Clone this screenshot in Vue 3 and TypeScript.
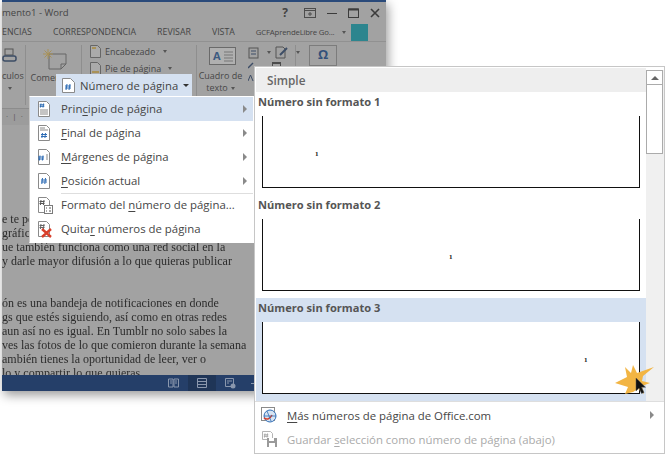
<script setup lang="ts">
type Item = { icon: string; before: string; key: string; after: string; sub?: boolean; sep?: boolean; active?: boolean; off?: boolean }

const menu: Item[] = [
  { icon: 'top', before: 'Prin', key: 'c', after: 'ipio de página', sub: true, active: true },
  { icon: 'bottom', before: '', key: 'F', after: 'inal de página', sub: true },
  { icon: 'margin', before: '', key: 'M', after: 'árgenes de página', sub: true },
  { icon: 'current', before: '', key: 'P', after: 'osición actual', sub: true, sep: true },
  { icon: 'format', before: 'Formato del ', key: 'n', after: 'úmero de página...' },
  { icon: 'remove', before: 'Quita', key: 'r', after: ' números de página' },
]

const previews = [
  { title: 'Número sin formato 1', pos: 'left', active: false },
  { title: 'Número sin formato 2', pos: 'center', active: false },
  { title: 'Número sin formato 3', pos: 'right', active: true },
]

const tabs = ['ENCIAS', 'CORRESPONDENCIA', 'REVISAR', 'VISTA']

const docTop = ['e te pe', 'gráfic', 'ue también funciona como una red social en la', 'y darle mayor difusión a lo que quieras publicar', '', '']
const docBottom = [
  'ón es una bandeja de notificaciones en donde',
  'gs que estés siguiendo, así como en otras redes',
  'aun así no es igual. En Tumblr no solo sabes la',
  'ves las fotos de lo que comieron durante la semana',
  'ambién tienes la oportunidad de leer, ver o',
  'lo y compartir lo que quieras.',
]
</script>

<template>
  <div class="stage">
    <div class="window">
      <div class="titlebar">
        <span class="title">mento1 - Word</span>
        <div class="controls">
          <span class="help">?</span>
          <svg width="12" height="10" viewBox="0 0 12 10"><rect x=".5" y=".5" width="11" height="9" fill="none" stroke="#4c4c4c"/><path d="M.5 2.5h11M6 4v4M4 6h4" stroke="#4c4c4c" fill="none"/></svg>
          <svg width="10" height="10" viewBox="0 0 10 10"><path d="M0 5.5h10" stroke="#3c3c3c"/></svg>
          <svg width="11" height="10" viewBox="0 0 11 10"><rect x=".5" y="1" width="10" height="8.5" fill="none" stroke="#3c3c3c"/><path d="M.5 1.5h10" stroke="#3c3c3c" stroke-width="2"/></svg>
          <svg width="10" height="10" viewBox="0 0 10 10"><path d="M1 1l8 8M9 1l-8 8" stroke="#3c3c3c" stroke-width="1.6"/></svg>
        </div>
      </div>
      <div class="tabs">
        <span v-for="t in tabs" :key="t">{{ t }}</span>
        <span class="account">GCFAprendeLibre Go...</span>
        <span class="caret"></span>
        <span class="badge"></span>
      </div>
      <div class="ribbon">
        <div class="group g-links">
          <svg width="16" height="16" viewBox="0 0 16 16"><rect x="3" y="1" width="8" height="6" fill="none" stroke="#555"/><rect x="1" y="8" width="13" height="5" rx="2" fill="none" stroke="#3d4d66" stroke-width="1.5"/></svg>
          <span class="lbl low">culos</span>
          <span class="caret dark"></span>
        </div>
        <div class="group g-comment">
          <svg width="26" height="22" viewBox="0 0 26 22"><path d="M8 6h17v10l-5 5H8z" fill="none" stroke="#666"/><path d="M20 21v-5h5" fill="none" stroke="#666"/><path d="M7 1v10M2 6h10M3.500 2.500l7 7M10.500 2.500l-7 7" stroke="#a99258"/></svg>
          <span class="lbl">Comen</span>
        </div>
        <div class="group g-header">
          <div class="row"><svg width="11" height="13" viewBox="0 0 11 13"><path d="M.5.500h7l3 3v9H.5z" fill="#aaa" stroke="#666"/><path d="M2 2h4v2H2z" fill="#a99258"/></svg><span>Encabezado</span><span class="caret dark"></span></div>
          <div class="row"><svg width="11" height="13" viewBox="0 0 11 13"><path d="M.5.500h7l3 3v9H.5z" fill="#aaa" stroke="#666"/><path d="M2 9h7v2H2z" fill="#a99258"/></svg><span>Pie de página</span><span class="caret dark"></span></div>
        </div>
        <div class="group g-text">
          <svg width="27" height="18" viewBox="0 0 27 18"><rect x=".5" y=".5" width="26" height="17" fill="#b0b0b0" stroke="#6a6a6a"/><path d="M15 5h9M15 8h9M15 11h9M15 14h9" stroke="#777"/><text x="4" y="13" class="boxa">A</text></svg>
          <span class="lbl">Cuadro de</span>
          <span class="lbl">texto<span class="caret dark inl"></span></span>
        </div>
        <div class="group g-parts">
          <div class="row">
            <svg width="12" height="12" viewBox="0 0 12 12"><rect x="1" y="1" width="9" height="10" fill="none" stroke="#555"/><path d="M3 4h5M3 7h5" stroke="#3d4d66"/></svg>
            <span class="caret dark"></span>
            <svg width="14" height="13" viewBox="0 0 14 13"><path d="M1 1h7l2 2v9H1z" fill="none" stroke="#555"/><path d="M5 9l7-7" stroke="#3d4d66" stroke-width="2"/></svg>
            <span class="caret dark"></span>
          </div>
          <div class="row2">
            <svg width="6" height="20" viewBox="0 0 6 20"><path d="M0 6l5-5" stroke="#3d4d66" stroke-width="1.500"/><path d="M0 19l2.500-6 2.500 6" fill="none" stroke="#3d4d66"/></svg>
            <span class="cal"></span>
          </div>
        </div>
        <div class="group g-symbol"><span class="omega">Ω</span></div>
      </div>
      <div class="ruler"><span>·&nbsp;&nbsp;|&nbsp;&nbsp;·</span></div>
      <div class="doc">
        <p v-for="(l, i) in docTop" :key="'a' + i">{{ l }}&nbsp;</p>
        <p v-for="(l, i) in docBottom" :key="'b' + i">{{ l }}</p>
      </div>
      <div class="status">
        <svg width="11" height="10" viewBox="0 0 11 10"><path d="M.5 1h4.500v8H.5zM6 1h4.500v8H6z" fill="none" stroke="#8a97ad"/><path d="M2 3h2M2 5h2M7 3h2M7 5h2" stroke="#8a97ad"/></svg>
        <span class="view-on"><svg width="10" height="10" viewBox="0 0 10 10"><path d="M.5.500h9v9h-9zM.5 3.500h9M.5 6.500h9" fill="none" stroke="#8a97ad"/></svg></span>
        <svg width="11" height="11" viewBox="0 0 11 11"><path d="M.5.500h8v8h-8zM2 3h5M2 5h2" fill="none" stroke="#8a97ad"/><circle cx="8" cy="8" r="2.500" fill="#8a97ad"/></svg>
        <span class="minus"></span>
      </div>
    </div>

    <div class="menu-head">
      <svg width="13" height="15" viewBox="0 0 13 15"><path d="M.5.500h8l4 4v10H.5z" fill="#fff" stroke="#8a8a8a"/><path d="M5 6l-1 6M8 6l-1 6M3 8h6M3 10h6" stroke="#2f6db5" fill="none"/></svg>
      <span>Número de página</span>
      <span class="caret black"></span>
    </div>

    <div class="menu">
      <div v-for="m in menu" :key="m.icon" class="menu-wrap">
        <div class="menu-item" :class="{ active: m.active }">
          <svg class="ico" width="18" height="18" viewBox="0 0 18 18">
            <path d="M3.500 1.500h8l3 3v12h-11z" fill="#fff" stroke="#8a8a8a"/>
            <template v-if="m.icon === 'top'">
              <path d="M6 3.500l-.6 4M8.600 3.500l-.6 4M4.700 4.800h4.600M4.700 6.300h4.600" stroke="#2f6db5" fill="none"/>
              <path d="M5 10h8M5 12h8M5 14h8" stroke="#8a8a8a"/>
            </template>
            <template v-else-if="m.icon === 'bottom'">
              <path d="M5 4h5M5 6h8" stroke="#8a8a8a"/>
              <path d="M7.500 9l-.6 5M10.500 9l-.6 5M6 10.500h6M6 12.500h6" stroke="#2f6db5" fill="none"/>
            </template>
            <template v-else-if="m.icon === 'margin'">
              <path d="M5 7.500l-.6 5M8 7.500l-.6 5M3 9h6M3 11h6" stroke="#2f6db5" fill="none"/>
              <path d="M11 7h2M11 9h2M11 11h2" stroke="#8a8a8a"/>
            </template>
            <template v-else-if="m.icon === 'current'">
              <path d="M7.500 6l-.7 6M10.500 6l-.7 6M6 8h6M6 10h6" stroke="#2f6db5" fill="none"/>
            </template>
            <template v-else-if="m.icon === 'format'">
              <path d="M6 4l-.6 5M9 4l-.6 5M4.500 5.500h5M4.500 7.500h5" stroke="#555" fill="none"/>
              <rect x="9.500" y="9.500" width="8" height="8" fill="#fff" stroke="#7a7a7a"/>
              <path d="M11 12h1M14 12h2M11 15h1M14 15h2" stroke="#555"/>
            </template>
            <template v-else>
              <path d="M6 4l-.6 5M9 4l-.6 5M4.500 5.500h5M4.500 7.500h5" stroke="#666" fill="none"/>
              <path d="M7 9l9 8M16 9l-9 8" stroke="#d8402b" stroke-width="2.400"/>
            </template>
          </svg>
          <span class="txt nudge">{{ m.before }}<u>{{ m.key }}</u>{{ m.after }}</span>
          <span v-if="m.sub" class="tri"></span>
        </div>
        <div v-if="m.sep" class="menu-sep"></div>
      </div>
    </div>

    <div class="gallery">
      <div class="gallery-main">
        <div class="gallery-list">
          <div class="simple">Simple</div>
          <div v-for="p in previews" :key="p.title" class="section" :class="{ active: p.active }">
            <div class="section-title">{{ p.title }}</div>
            <div class="preview" :class="p.pos"><span>1</span></div>
          </div>
        </div>
        <div class="scroll">
          <div class="up"><span></span></div>
          <div class="thumb"></div>
        </div>
      </div>
      <div class="foot">
        <div class="foot-item">
          <svg width="18" height="18" viewBox="0 0 18 18"><rect x="1.500" y="1.500" width="13" height="13" fill="#fff" stroke="#8a8a8a"/><circle cx="10" cy="10" r="6" fill="#d6e4f3" stroke="#2f6db5"/><path d="M4 12c3 2 6 1 8-3" fill="none" stroke="#d8402b" stroke-width="1.600"/><path d="M7 5l4 10M4 10h12" stroke="#2f6db5" stroke-width=".8"/></svg>
          <span class="txt"><u>M</u>ás números de página de Office.com</span>
          <span class="tri"></span>
        </div>
        <div class="foot-item off">
          <svg width="18" height="18" viewBox="0 0 18 18"><path d="M2.500 1.500h8l2 2v6h-10z" fill="#fff" stroke="#b5b5b5"/><path d="M5 3.500l-.5 4M7.500 3.500l-.5 4M3.800 4.800h4.500M3.800 6.300h4.500" stroke="#aaa" fill="none"/><rect x="7" y="8" width="10" height="9" fill="#9a9a9a"/><rect x="9" y="8" width="5" height="3" fill="#fff"/><rect x="9" y="13" width="6" height="4" fill="#fff"/></svg>
          <span class="txt">Guardar <u>s</u>elección como número de página (abajo)</span>
        </div>
      </div>
    </div>

    <svg class="burst" width="46" height="36" viewBox="0 0 46 36">
      <path d="M3 21L15 15 13 5 19 11 21 3 25 11 42 5 31 14 30 19 38 21 30 24 32 32 26 27 21 30 13 32 16 25z" fill="#f2b544"/>
      <path d="M24 16v13l3-3 2.500 5.500 2.500-1-2.500-5.300h4z" fill="#111" stroke="#555" stroke-width=".5"/>
    </svg>
  </div>
</template>

<style>
body { margin: 0; background: #fff; }
</style>

<style scoped>
.stage {
  position: relative;
  width: 666px;
  height: 455px;
  overflow: hidden;
  background: #fff;
  font-family: "Open Sans", "Noto Sans", sans-serif;
  font-size: 11.400px;
  color: #444;
}
.window {
  margin-left: 2px;
  width: 384px;
  height: 391px;
  display: flex;
  flex-direction: column;
  background: #a2a2a2;
  border-top: 2px solid #2a4a7a;
  box-sizing: border-box;
  box-shadow: 2px 4px 10px rgba(0, 0, 0, .4);
  color: #3f3f3f;
  overflow: hidden;
}
.titlebar {
  height: 21px;
  flex: none;
  display: flex;
  align-items: center;
  justify-content: space-between;
  padding-right: 6px;
}
.title { color: #454545; font-size: 9.500px; }
.controls { display: flex; align-items: center; gap: 11px; }
.help { font-weight: 700; font-size: 12px; color: #444; margin-right: 5px; }
.tabs {
  height: 18px;
  flex: none;
  display: flex;
  align-items: center;
  gap: 21px;
  font-size: 8.800px;
  color: #454545;
  white-space: nowrap;
}
.tabs .account { font-size: 7.800px; letter-spacing: -.2px; }
.tabs .caret { margin-left: -13px; }
.badge {
  width: 17px;
  height: 17px;
  background: #2d858e;
  margin-left: -16px;
}
.caret {
  display: inline-block;
  flex: none;
  width: 0;
  height: 0;
  border-left: 2.500px solid transparent;
  border-right: 2.500px solid transparent;
  border-top: 3px solid #555;
}
.caret.dark { border-top-color: #555; margin-left: 3px; }
.caret.inl { vertical-align: middle; }
.caret.black { border-top-color: #333; border-left-width: 3px; border-right-width: 3px; }
.ribbon {
  height: 66px;
  flex: none;
  display: flex;
  border-top: 1px solid #919191;
  border-bottom: 1px solid #8c8c8c;
  font-size: 9px;
}
.group {
  display: flex;
  flex-direction: column;
  align-items: center;
  border-right: 1px solid #8e8e8e;
  margin: 3px 0;
  box-sizing: border-box;
  flex: none;
  color: #474747;
}
.lbl { line-height: 12px; white-space: nowrap; }
.low { margin-top: 6px; }
.g-links { width: 24px; align-items: flex-start; padding-top: 3px; }
.g-links .caret { margin-left: 6px; margin-top: 5px; }
.g-comment { width: 56px; padding-top: 3px; }
.g-comment .lbl { margin-top: 2px; margin-right: 16px; }
.g-header { width: 115px; align-items: flex-start; padding: 0 0 0 8px; gap: 4px; }
.row { display: flex; align-items: center; gap: 4px; white-space: nowrap; height: 13px; }
.g-text { width: 51px; padding: 2px 0 0 0; border-right: none; }
.g-text svg { margin-bottom: 5px; }
.g-text .lbl { margin-right: 4px; }
.boxa { font: 700 11px "Open Sans", sans-serif; fill: #3d5a80; }
.g-parts { width: 48px; padding: 1px 0 0 0; align-items: flex-start; }
.row2 { position: relative; width: 47px; display: flex; margin-top: 3px; }
.cal { width: 9px; height: 5px; margin: 0 0 0 18px; border-top: 2px solid #4c4c4c; border-left: 1px solid #4c4c4c; border-right: 1px solid #4c4c4c; box-sizing: border-box; }
.g-symbol { border: none; padding: 0 0 0 13px; }
.omega {
  width: 26px;
  height: 19px;
  border: 1px solid #7c7c7c;
  text-align: center;
  line-height: 17px;
  font-size: 13px;
  font-weight: 700;
  color: #32507a;
}
.ruler { height: 16px; flex: none; font-size: 8px; color: #555; line-height: 14px; padding-left: 4px; background: #9c9c9c; }
.doc {
  flex: 1;
  min-height: 0;
  overflow: hidden;
  padding-top: 87px;
  font-family: "Liberation Serif", serif;
  font-size: 12px;
  color: #2c2c2c;
  white-space: nowrap;
  filter: blur(.25px);
}
.doc p { margin: 0; height: 14px; line-height: 14px; }
.status {
  height: 16px;
  flex: none;
  background: #253f69;
  display: flex;
  align-items: center;
  padding-left: 166px;
  box-sizing: border-box;
  gap: 9px;
}
.view-on { width: 28px; height: 16px; background: #1f3557; display: flex; align-items: center; justify-content: center; }
.minus { width: 5px; height: 1px; background: #8a97ad; margin-left: 6px; }

.menu-head {
  position: absolute;
  left: 56px;
  top: 74px;
  width: 136px;
  height: 22px;
  background: #d5e1f1;
  display: flex;
  align-items: center;
  padding-left: 6px;
  box-sizing: border-box;
  gap: 5px;
  font-size: 11.300px;
  color: #444;
  white-space: nowrap;
}
.menu {
  position: absolute;
  left: 29px;
  top: 96px;
  width: 225px;
  height: 147px;
  background: #fff;
  border: 1px solid #fff;
  border-left: 1px solid #c8c8c8;
  box-sizing: border-box;
}
.menu-item {
  position: relative;
  height: 24px;
  display: flex;
  align-items: center;
  padding-left: 5px;
  gap: 8px;
  white-space: nowrap;
}
.menu-item.active { background: #d5e1f1; }
.menu-sep { height: 1px; background: #dedede; margin: 0 0 -1px 31px; }
.ico { flex: none; }
.txt { color: #464646; }
.nudge { padding-bottom: 2px; }
u { text-underline-offset: 2px; }
.tri {
  position: absolute;
  right: 6px;
  top: 8px;
  width: 0;
  height: 0;
  border-top: 4px solid transparent;
  border-bottom: 4px solid transparent;
  border-left: 4px solid #8a8a8a;
}
.gallery {
  position: absolute;
  left: 254px;
  top: 66px;
  width: 411px;
  height: 388px;
  background: #fff;
  border: 1px solid #c6c6c6;
  box-sizing: border-box;
}
.gallery-main { display: flex; height: 334px; padding: 1px 0 0 1px; box-sizing: border-box; }
.gallery-list { width: 390px; flex: none; }
.simple {
  height: 24px;
  background: #eeeeee;
  padding-left: 11px;
  line-height: 24px;
  font-size: 11.800px;
  font-weight: 600;
  color: #666;
}
.section { height: 103px; box-sizing: border-box; }
.section.active { background: #d5e1f1; }
.section-title {
  height: 24px;
  line-height: 20px;
  padding-left: 2px;
  font-weight: 700;
  font-size: 11.100px;
  color: #555;
}
.preview {
  position: relative;
  height: 72px;
  margin: 0 6px;
  width: 378px;
  background: #fff;
  border: 1px solid #111;
  border-top: none;
  box-sizing: border-box;
}
.preview span {
  position: absolute;
  top: 34px;
  font: 700 7px "Liberation Serif", serif;
  color: #111;
}
.preview.left span { left: 52px; }
.preview.center span { left: 186px; }
.preview.right span { left: 321px; }
.scroll {
  width: 18px;
  flex: none;
  background: #f0f0f0;
  margin-top: 2px;
}
.up { height: 15px; margin: 0 1px 0 0; background: #fff; border: 1px solid #ababab; box-sizing: border-box; display: flex; align-items: center; justify-content: center; }
.up span { width: 0; height: 0; border-left: 4px solid transparent; border-right: 4px solid transparent; border-bottom: 4px solid #666; }
.thumb { height: 69px; margin-right: 1px; background: #fff; border: 1px solid #ababab; border-top: none; box-sizing: border-box; }
.foot { border-top: 1px solid #dedede; padding-top: 1px; }
.foot-item {
  position: relative;
  height: 24px;
  display: flex;
  align-items: center;
  padding-left: 5px;
  gap: 9px;
}
.foot-item .tri { right: 10px; }
.foot-item.off .txt { color: #aaaaaa; }

.burst { position: absolute; left: 612px; top: 362px; }
</style>
